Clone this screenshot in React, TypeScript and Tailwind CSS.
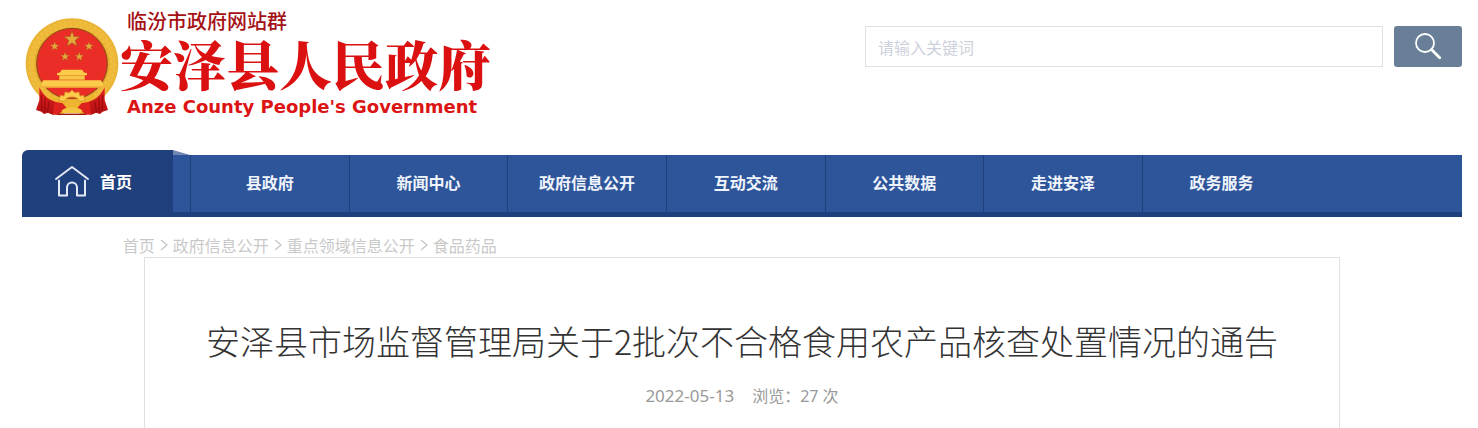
import type { ReactNode } from "react"

// Cabecera del portal: logotipo, buscador, menú principal, migas y titular.

const NAV = ["县政府", "新闻中心", "政府信息公开", "互动交流", "公共数据", "走进安泽", "政务服务"]

const CRUMBS = ["首页", "政府信息公开", "重点领域信息公开", "食品药品"]

function Star({ x, y, r }: { x: number; y: number; r: number }) {
    return (
        <path
            transform={`translate(${x} ${y}) scale(${r})`}
            d="M0-1 .24-.33.95-.31.39.12.59.81 0 .41-.59.81-.39.12-.95-.31-.24-.33z"
            fill="#E3A93A"
            stroke="#A8571A"
            strokeWidth=".07"
        />
    )
}

function Emblem() {
    return (
        <svg width="96" height="100" viewBox="72 51 288 300" className="shrink-0" aria-hidden>
            <defs>
                <radialGradient id="wreath" cx="50%" cy="50%" r="50%">
                    <stop offset=".74" stopColor="#C98A1C" />
                    <stop offset=".82" stopColor="#F2BE3C" />
                    <stop offset="1" stopColor="#E9B335" />
                </radialGradient>
                <linearGradient id="ribbon" x1="0" y1="0" x2="0" y2="1">
                    <stop offset="0" stopColor="#E32420" />
                    <stop offset="1" stopColor="#B40F12" />
                </linearGradient>
            </defs>
            <path d="M150 280h132l4 60-40 4-12-6H196l-14 8-36-6z" fill="#EDB52F" />
            <ellipse cx="216" cy="191" rx="139" ry="136" fill="url(#wreath)" />
            <circle cx="216" cy="191" r="128" fill="none" stroke="#FBD766" strokeWidth="5" strokeDasharray="7 9" opacity=".3" />
            <circle cx="216" cy="191" r="115" fill="none" stroke="#C98B20" strokeWidth="4" strokeDasharray="5 11" opacity=".3" />
            <circle cx="216" cy="191" r="106" fill="#EB2D27" stroke="#8F4A14" strokeWidth="3" />
            <Star x={216} y={118} r={25} />
            <Star x={164} y={139} r={14} />
            <Star x={267} y={139} r={14} />
            <Star x={195} y={170} r={14} />
            <Star x={238} y={170} r={14} />
            {/* Tiananmen */}
            <path d="M185 209h62l4 8 10 3v6h-7v14h-76v-14h-7v-6l10-3z" fill="#FCCB4A" />
            <path d="M130 241h172l7 8v14H124v-14z" fill="#FCCB4A" />
            <path d="M124 261h185M178 227h76M178 238h76" stroke="#DB8420" strokeWidth="2" />
            {/* Rueda dentada y cintas */}
            <path d="M152 278c20 25 36 20 64 20s44 5 64-20l10 24c-22 24-48 26-74 26s-52-2-74-26z" fill="#EDB52F" />
            <path
                d="m176 302 5-16 11 2 3-12 13 2 8-8 8 8 13-2 3 12 11-2 5 16-18 2a23 18 0 0 0-44 0z"
                fill="#FCCB4A"
                stroke="#D18A1C"
                strokeWidth="2"
            />
            <path d="m150 302 38 8 12 14-26 20h-18zM282 302l-38 8-12 14 26 20h18z" fill="#DE211E" />
            <path d="M184 333c10-14 54-14 64 0l-10 7h-44z" fill="#F5C342" />
            <path d="M172 343h86" stroke="#98130F" strokeWidth="4" />
            <path d="M118 262c12 24 26 36 46 43l-6 39-14-6-12 4-8-7-16-5 10-30z" fill="url(#ribbon)" />
            <path d="M314 262c-12 24-26 36-46 43l6 39 14-6 12 4 8-7 16-5-10-30z" fill="url(#ribbon)" />
            <path d="m124 285 2 48m9-38v42m13-32-6 32M308 285l-2 48m-9-38v42m-13-32 6 32" fill="none" stroke="#9D0D11" strokeWidth="4" />
        </svg>
    )
}

function Chevron() {
    return (
        <svg width="10" height="12" viewBox="0 0 10 12" fill="none" stroke="#C4C4C4" strokeWidth="1.2" className="mx-1" aria-hidden>
            <path d="M2 1 8 6 2 11" />
        </svg>
    )
}

function NavItem({ children }: { children: ReactNode }) {
    return (
        <li className="border-l border-[#20407D]">
            <a href="#" className="flex h-full items-center justify-center whitespace-nowrap pb-[3px] text-base font-bold text-[#F0F4FC]">
                {children}
            </a>
        </li>
    )
}

export default function App() {
    return (
        <div className="overflow-hidden bg-white pl-[22px] pr-4 font-['Noto_Sans_CJK_SC',sans-serif]">
            <header className="flex h-[150px] items-start justify-between">
                <a href="#" className="flex pl-0.5 pt-2" aria-label="安泽县人民政府">
                    <span className="pt-[9px]">
                        <Emblem />
                    </span>
                    <span className="block whitespace-nowrap">
                        <span className="block pl-[7px] text-xl font-medium leading-[26px] text-[#A51216]">临汾市政府网站群</span>
                        <span className="block font-['Noto_Serif_CJK_SC','Noto_Sans_CJK_SC',serif] text-[53px] font-black leading-[58px] text-[#DB1010]">
                            安泽县人民政府
                        </span>
                        <span className="block pl-[7px] font-['DejaVu_Sans',sans-serif] text-lg font-bold leading-[30px] text-[#DB1414]">
                            Anze County People&apos;s Government
                        </span>
                    </span>
                </a>

                <form className="flex w-[597px] gap-[11px] pt-[26px]" onSubmit={(e) => e.preventDefault()}>
                    <input
                        type="text"
                        aria-label="请输入关键词"
                        placeholder="请输入关键词"
                        className="h-[41px] min-w-0 flex-1 border border-[#E1E1E1] px-3 text-base text-gray-700 outline-none placeholder:text-[#CDD2DC]"
                    />
                    <button type="submit" aria-label="搜索" className="flex h-[41px] w-[68px] items-center justify-center rounded-[3px] bg-[#687F97] pb-0.5">
                        <svg width="28" height="28" viewBox="0 0 28 28" fill="none" stroke="#fff" aria-hidden>
                            <circle cx="11" cy="11" r="9" strokeWidth="1.8" />
                            <path d="m17.5 17.5 8.200 8.200" strokeWidth="2.8" strokeLinecap="round" />
                        </svg>
                    </button>
                </form>
            </header>

            <nav className="flex items-end">
                <a href="#" className="flex h-[67px] w-[151px] items-center rounded-tl-md bg-[#20407D] pb-[5px] pl-8 text-base font-bold text-white">
                    <svg width="36" height="32" viewBox="0 0 36 32" fill="none" stroke="#E3E8F3" strokeWidth="2" strokeLinecap="round" strokeLinejoin="round" className="mr-2.5" aria-hidden>
                        <path d="M2 14 18 2l16 12" />
                        <path d="M5 15.500v15h8V22.500a5 5 0 0 1 10 0v8h8v-15" />
                    </svg>
                    首页
                </a>
                <div className="w-[17px]">
                    <svg width="17" height="5" viewBox="0 0 17 5" className="block" aria-hidden>
                        <path d="M0 0 17 5H0z" fill="#7186B0" />
                    </svg>
                    <div className="h-[62px] border-b-[5px] border-[#20407D] bg-[#2E559A]" />
                </div>
                <ul className="grid h-[62px] flex-1 grid-cols-8 border-b-[5px] border-[#20407D] bg-[#2E559A] pr-[3px]">
                    {NAV.map((label) => (
                        <NavItem key={label}>{label}</NavItem>
                    ))}
                </ul>
            </nav>

            <div className="flex h-10 items-center whitespace-nowrap pl-[7%] pt-4 text-base text-[#C9C9C9]">
                {CRUMBS.map((c, i) => (
                    <span key={c} className="flex items-center">
                        {i > 0 && <Chevron />}
                        <a href="#">{c}</a>
                    </span>
                ))}
            </div>

            <main className="mx-auto w-[83%] border border-b-0 border-[#E1E1E1] pb-6 pt-[58px] text-center">
                <h1 className="text-[34px] font-light leading-[50px] text-[#333]">
                    安泽县市场监督管理局关于2批次不合格食用农产品核查处置情况的通告
                </h1>
                <p className="mt-[18px] flex items-baseline justify-center gap-[18px] font-['Noto_Sans','Noto_Sans_CJK_SC',sans-serif] text-base leading-6 text-[#999]">
                    <span className="text-[17px]">2022-05-13</span>
                    <span>浏览：27 次</span>
                </p>
            </main>
        </div>
    )
}
